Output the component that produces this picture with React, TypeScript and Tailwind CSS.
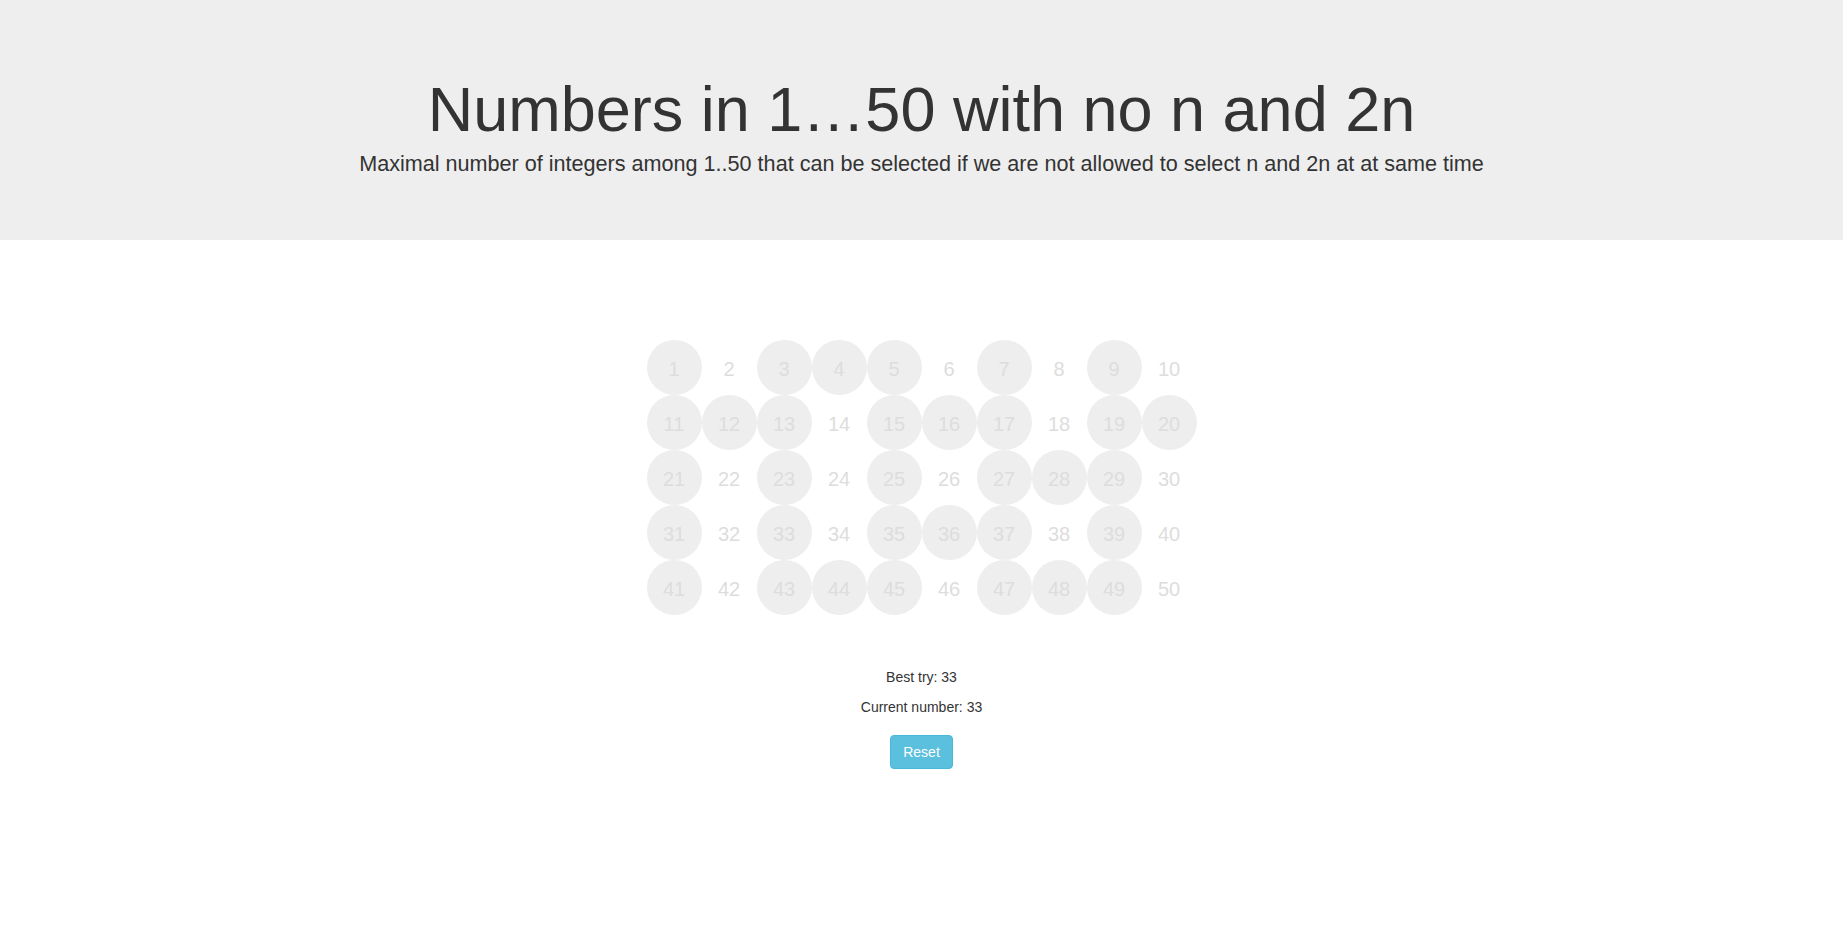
import { useState } from 'react';

const INITIAL = [
  1, 3, 4, 5, 7, 9,
  11, 12, 13, 15, 16, 17, 19, 20,
  21, 23, 25, 27, 28, 29,
  31, 33, 35, 36, 37, 39,
  41, 43, 44, 45, 47, 48, 49,
];

const numbers = Array.from({ length: 50 }, (_, i) => i + 1);

export default function App() {
  const [selected, setSelected] = useState<Set<number>>(new Set(INITIAL));
  const [best, setBest] = useState(33);

  const toggle = (n: number) => {
    setSelected((prev) => {
      const next = new Set(prev);
      if (next.has(n)) {
        next.delete(n);
      } else {
        if (next.has(2 * n) || (n % 2 === 0 && next.has(n / 2))) return prev;
        next.add(n);
      }
      if (next.size > best) setBest(next.size);
      return next;
    });
  };

  return (
    <div className="min-h-screen bg-white font-['Liberation_Sans',Arial,sans-serif] text-[#333]">
      <div className="h-[240px] bg-[#eee] pt-[75px] text-center">
        <h1 className="text-[63px] leading-[69px] font-normal">Numbers in 1…50 with no n and 2n</h1>
        <p className="mt-[5px] text-[21.6px] leading-[30px]">
          Maximal number of integers among 1..50 that can be selected if we are not allowed to select n and 2n at at same time
        </p>
      </div>

      <div className="flex justify-center pt-[100px]">
        <div className="grid grid-cols-10">
          {numbers.map((n) => (
            <div
              key={n}
              onClick={() => toggle(n)}
              className={`h-[55px] w-[55px] cursor-pointer select-none rounded-full text-center text-[20px] leading-[59px] text-[#ddd] ${
                selected.has(n) ? 'bg-[#eee]' : ''
              }`}
            >
              {n}
            </div>
          ))}
        </div>
      </div>

      <div className="mt-[52px] flex flex-col items-center text-[14px] leading-[20px]">
        <p className="mb-[10px]">Best try: {best}</p>
        <p className="mb-[18px]">Current number: {selected.size}</p>
        <button
          onClick={() => setSelected(new Set())}
          className="rounded-[4px] border border-[#46b8da] bg-[#5bc0de] px-[12px] py-[6px] text-[14px] leading-[20px] text-white"
        >
          Reset
        </button>
      </div>
    </div>
  );
}
